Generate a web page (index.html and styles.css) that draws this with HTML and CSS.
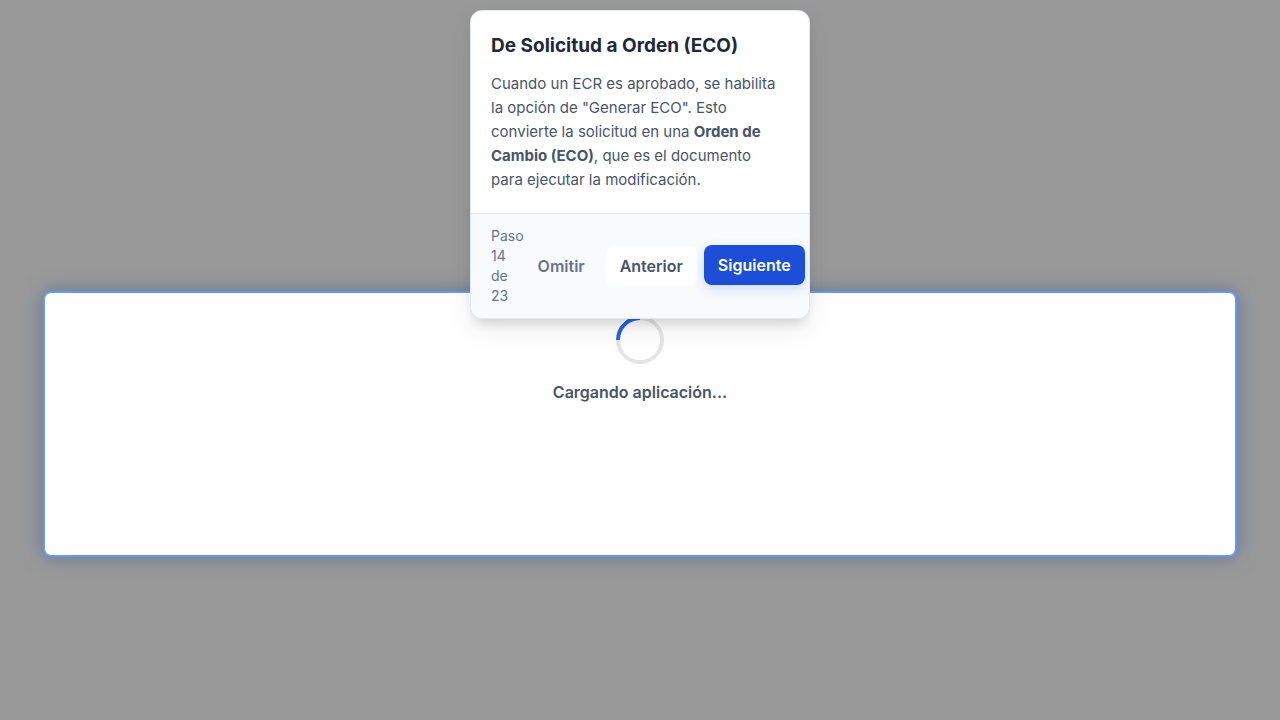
FILE: index.html
```html
<!DOCTYPE html>
<html lang="es">
<head>
<meta charset="utf-8">
<meta name="viewport" content="width=device-width, initial-scale=1">
<title>Cargando aplicación</title>
<link rel="stylesheet" href="styles.css">
</head>
<body>
<div class="highlight"></div>
<main class="loader" role="status">
  <div class="spinner"></div>
  <p class="loader-text">Cargando aplicación...</p>
</main>
<section class="tour" role="dialog" aria-labelledby="tour-title">
  <div class="tour-body">
    <h1 class="tour-title" id="tour-title">De Solicitud a Orden (ECO)</h1>
    <p class="tour-text">Cuando un ECR es aprobado, se habilita la opción de "Generar ECO". Esto convierte la solicitud en una <strong>Orden de Cambio (ECO)</strong>, que es el documento para ejecutar la modificación.</p>
  </div>
  <footer class="tour-footer">
    <span class="tour-progress">Paso 14 de 23</span>
    <div class="tour-actions">
      <button class="btn btn-skip" type="button">Omitir</button>
      <button class="btn btn-prev" type="button">Anterior</button>
      <button class="btn btn-next" type="button">Siguiente</button>
    </div>
  </footer>
</section>
</body>
</html>
```
FILE: styles.css
```css
* {
  box-sizing: border-box;
}

body {
  margin: 0;
  min-height: 100vh;
  display: flex;
  align-items: center;
  justify-content: center;
  background: #999999;
  color: #475569;
  font-family: Inter, "Liberation Sans", sans-serif;
  font-size: 16px;
  line-height: 24px;
}

.highlight {
  position: absolute;
  top: 291px;
  left: 43px;
  right: 43px;
  height: 266px;
  border: 2px solid #619bf9;
  border-radius: 8px;
  background: #ffffff;
  box-shadow: 0 0 20px rgba(50, 85, 145, 0.5);
}

.loader {
  position: relative;
  display: flex;
  flex-direction: column;
  align-items: center;
  gap: 16px;
}

.spinner {
  width: 48px;
  height: 48px;
  border: 4px solid #e5e5e5;
  border-top-color: #2563eb;
  border-radius: 50%;
  transform: rotate(-45deg);
}

.loader-text {
  margin: 0;
  font-weight: 600;
}

.tour {
  position: absolute;
  top: 10px;
  left: 50%;
  width: 340px;
  margin-left: -170px;
  border: 1px solid #e2e8f0;
  border-radius: 12px;
  background: #ffffff;
  box-shadow: 0 10px 30px rgba(0, 0, 0, 0.07), 0 8px 12px -4px rgba(0, 0, 0, 0.14);
  overflow: hidden;
}

.tour-body {
  padding: 20px 24px 21px 20px;
}

.tour-title {
  margin: 0 0 12px;
  color: #1e293b;
  font-size: 19px;
  font-weight: 700;
  line-height: 29px;
}

.tour-text {
  margin: 0;
  font-size: 15px;
  line-height: 24px;
}

.tour-footer {
  display: flex;
  align-items: center;
  justify-content: space-between;
  padding: 12px 20px;
  border-top: 1px solid #e2e8f0;
  background: #f8fafc;
}

.tour-progress {
  color: #64748b;
  font-size: 14px;
  line-height: 20px;
}

.tour-actions {
  display: flex;
  gap: 7px;
}

.btn {
  padding: 8px 14px;
  border: 0;
  border-radius: 8px;
  background: transparent;
  color: #64748b;
  font: inherit;
  font-weight: 600;
  cursor: pointer;
}

.btn-prev {
  background: #ffffff;
  color: #475569;
}

.btn-next {
  background: #1d4ed8;
  color: #ffffff;
  box-shadow: 0 4px 12px rgba(37, 99, 235, 0.2);
  transform: translateY(-1px);
}
```
